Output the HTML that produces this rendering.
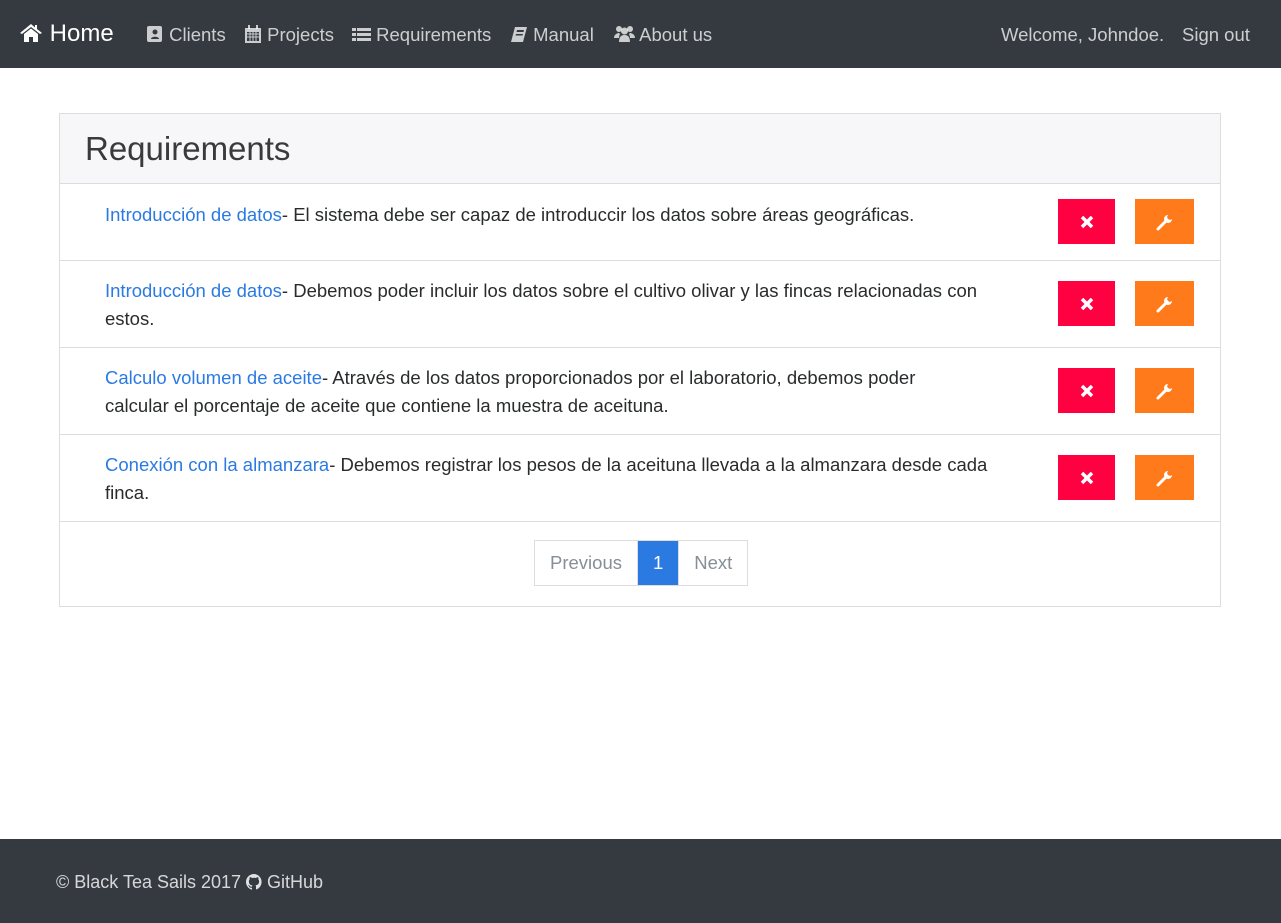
<!DOCTYPE html>
<html><head><meta charset="utf-8"><style>
*{box-sizing:border-box}
body{margin:0;width:1281px;height:923px;position:relative;font-family:"Liberation Sans",sans-serif;color:#292b2c;background:#fff;overflow:hidden}
.nav{position:absolute;top:0;left:0;width:1281px;height:68px;background:#343a40;color:rgba(255,255,255,.75);font-size:18.5px}
.nav span{position:absolute;top:24px;white-space:nowrap}
.nav svg{vertical-align:-2px;fill:currentColor}
.brand{color:#fff;font-size:24px;top:20px!important}
.card{position:absolute;left:59px;top:113px;width:1162px;height:494px;border:1px solid #ddd}
.hdr{height:70px;background:#f7f7f9;border-bottom:1px solid #ddd;font-size:33px;padding:16px 0 0 25px;color:#3a3a3a}
.row{position:absolute;left:0;width:1160px;border-bottom:1px solid #ddd;font-size:18.5px;line-height:28px}
.row .t{position:absolute;left:45px;top:16px;width:888px}
.row a{color:#2a7ae2;text-decoration:none}
.b{position:absolute;top:20px;height:45px;display:flex;align-items:center;justify-content:center}
.r{left:998px;width:57px;background:#ff0040}
.o{left:1075px;width:59px;background:#ff7a1a}
.pg{position:absolute;left:474px;top:426px;height:46px;display:flex;border:1px solid #ddd;font-size:18.5px;color:#868e96}
.pg div{padding:0 15px;line-height:44px}
.pg .a{background:#2a7ae2;color:#fff;border-left:1px solid #ddd;border-right:1px solid #ddd}
.foot{position:absolute;left:0;top:839px;width:1281px;height:84px;background:#343a40;color:rgba(255,255,255,.8);font-size:18px;padding:33px 0 0 56px}
</style></head><body>
<div class="nav">
<span class="brand" style="left:19px"><svg width="24" height="20" viewBox="0 0 24 20"><path d="M12 1 L1 10 L3 11 L12 4 L21 11 L23 10 L18 6 V2 H16 V4.5Z M5 11 V19 H10 V14 H14 V19 H19 V11 L12 5.5Z" fill="#fff"/></svg> Home</span>
<span style="left:146px"><svg width="18" height="18" viewBox="0 0 18 18"><rect x="1" y="1" width="15" height="16" rx="2"/><circle cx="9" cy="7" r="2.5" fill="#343a40"/><path d="M5 14c0-3 8-3 8 0z" fill="#343a40"/></svg> Clients</span>
<span style="left:244px"><svg width="18" height="18" viewBox="0 0 18 18"><path d="M1 3h16v15H1z M3 7v9h12V7z"/><path d="M3 9h12M3 12h12M6 7v9M9 7v9M12 7v9" stroke="currentColor" fill="none"/><rect x="4" y="0" width="2" height="4"/><rect x="12" y="0" width="2" height="4"/></svg> Projects</span>
<span style="left:352px"><svg width="19" height="16" viewBox="0 0 19 16"><path d="M0 1h4v3H0zM5 1h14v3H5zM0 6h4v3H0zM5 6h14v3H5zM0 11h4v3H0zM5 11h14v3H5z"/></svg> Requirements</span>
<span style="left:510px"><svg width="18" height="17" viewBox="0 0 18 17"><path d="M5 1h12l-4 15H1z M7 4l-.5 2h7l.5-2z M6 8l-.5 1.5h7L13 8z" fill-rule="evenodd"/></svg> Manual</span>
<span style="left:614px"><svg width="21" height="18" viewBox="0 0 21 18"><circle cx="5" cy="4" r="3"/><circle cx="16" cy="4" r="3"/><circle cx="10.5" cy="6" r="3.5"/><path d="M0 13c0-4 4-5 5-5l1 1c-1 2-1 4-1 4zM21 13c0-4-4-5-5-5l-1 1c1 2 1 4 1 4zM5 17c0-6 3-7 5.5-7s5.5 1 5.5 7z"/></svg> About us</span>
<span style="left:1001px">Welcome, Johndoe.</span>
<span style="left:1182px">Sign out</span>
</div>
<div class="card">
<div class="hdr">Requirements</div>
<div class="row" style="top:70px;height:77px"><div class="t" style="top:17px"><a>Introducción de datos</a>- El sistema debe ser capaz de introduccir los datos sobre áreas geográficas.</div><div class="b r" style="top:15px"></div><div class="b o" style="top:15px"></div></div>
<div class="row" style="top:147px;height:87px"><div class="t"><a>Introducción de datos</a>- Debemos poder incluir los datos sobre el cultivo olivar y las fincas relacionadas con estos.</div><div class="b r"></div><div class="b o"></div></div>
<div class="row" style="top:234px;height:87px"><div class="t" style="width:860px"><a>Calculo volumen de aceite</a>- Através de los datos proporcionados por el laboratorio, debemos poder calcular el porcentaje de aceite que contiene la muestra de aceituna.</div><div class="b r"></div><div class="b o"></div></div>
<div class="row" style="top:321px;height:87px"><div class="t"><a>Conexión con la almanzara</a>- Debemos registrar los pesos de la aceituna llevada a la almanzara desde cada finca.</div><div class="b r"></div><div class="b o"></div></div>
<div class="pg"><div>Previous</div><div class="a">1</div><div>Next</div></div>
</div>
<div class="foot">© Black Tea Sails 2017 <svg width="16" height="16" viewBox="0 0 16 16" style="vertical-align:-2px"><path fill="rgba(255,255,255,.85)" d="M8 0a8 8 0 0 0-2.5 15.6c.4 0 .5-.2.5-.4v-1.5c-2.2.5-2.7-1-2.7-1-.4-.9-.9-1.2-.9-1.2-.7-.5.1-.5.1-.5.8.1 1.2.8 1.2.8.7 1.3 1.900.9 2.300.7.1-.5.3-.9.5-1.1-1.8-.2-3.600-.9-3.600-4 0-.9.3-1.600.8-2.100-.1-.2-.4-1 .1-2.100 0 0 .7-.2 2.200.8a7.400 7.400 0 0 1 4 0c1.500-1 2.200-.8 2.200-.8.4 1.100.2 1.900.1 2.100.5.6.8 1.300.8 2.100 0 3.100-1.900 3.700-3.600 3.900.3.3.5.8.5 1.500v2.200c0 .2.1.5.6.4A8 8 0 0 0 8 0z"/></svg> GitHub</div>
<script>
document.querySelectorAll('.r').forEach(e=>e.innerHTML='<svg width="14" height="14" viewBox="0 0 14 14"><path d="M2 2L12 12M12 2L2 12" stroke="#fff" stroke-width="3.5"/></svg>');
document.querySelectorAll('.o').forEach(e=>e.innerHTML='<svg width="18" height="18" viewBox="0 0 18 18"><path d="M2 16L9 9" stroke="#fff" stroke-width="3" stroke-linecap="round"/><path d="M12 2a4 4 0 1 0 4 4l-2 1-2-1-1-2 1-2z" fill="#fff"/></svg>');
</script>
</body></html>
